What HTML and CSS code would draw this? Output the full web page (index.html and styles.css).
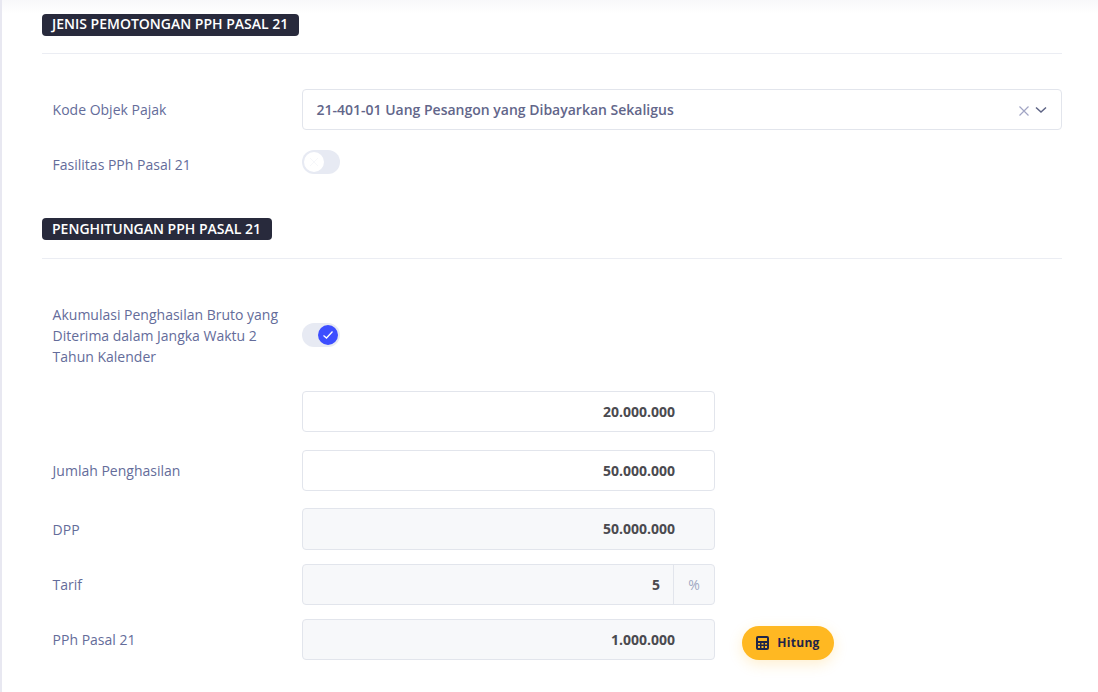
FILE: index.html
```html
<!DOCTYPE html>
<html lang="id">
<head>
<meta charset="utf-8">
<title>PPh Pasal 21</title>
<link rel="stylesheet" href="styles.css">
</head>
<body>
<main class="page">
  <section class="section first">
    <div class="head"><span class="badge">JENIS PEMOTONGAN PPH PASAL 21</span></div>
    <div class="row r-kode">
      <label class="label">Kode Objek Pajak</label>
      <div class="select">
        <span class="select-text">21-401-01 Uang Pesangon yang Dibayarkan Sekaligus</span>
        <svg class="x" width="10" height="10" viewBox="0 0 10 10"><path d="M.5.5l9 9M9.5.5l-9 9" stroke="#a1a5c4" stroke-width="1.2" fill="none"/></svg>
        <svg class="chev" width="12" height="8" viewBox="0 0 12 8"><path d="M1 1.500l5 4.500 5-4.500" stroke="#5e6485" stroke-width="1.500" fill="none"/></svg>
      </div>
    </div>
    <div class="row r-fas">
      <label class="label">Fasilitas PPh Pasal 21</label>
      <div class="toggle">
        <span class="knob off"><svg width="10" height="10" viewBox="0 0 10 10"><path d="M1 1l8 8M9 1l-8 8" stroke="#f6f7fa" stroke-width="1" fill="none"/></svg></span>
      </div>
    </div>
  </section>
  <section class="section second">
    <div class="head"><span class="badge">PENGHITUNGAN PPH PASAL 21</span></div>
    <div class="row r-aku">
      <label class="label">Akumulasi Penghasilan Bruto yang Diterima dalam Jangka Waktu 2 Tahun Kalender</label>
      <div class="toggle on">
        <span class="knob"><svg width="12" height="10" viewBox="0 0 12 10"><path d="M1.500 5.500l3 2.500 6-6.500" stroke="#fff" stroke-width="1.300" fill="none"/></svg></span>
      </div>
    </div>
    <div class="row r-20">
      <span class="label"></span>
      <div class="input">20.000.000</div>
    </div>
    <div class="row r-jml">
      <label class="label">Jumlah Penghasilan</label>
      <div class="input">50.000.000</div>
    </div>
    <div class="row r-dpp">
      <label class="label">DPP</label>
      <div class="input solid tall">50.000.000</div>
    </div>
    <div class="row r-tarif">
      <label class="label">Tarif</label>
      <div class="group">
        <div class="group-value">5</div>
        <div class="group-addon">%</div>
      </div>
    </div>
    <div class="row r-pph">
      <label class="label">PPh Pasal 21</label>
      <div class="input solid">1.000.000</div>
      <button class="btn" type="button">
        <svg width="13" height="14" viewBox="0 0 13 14"><path fill="#1f2548" fill-rule="evenodd" d="M2 0h9a2 2 0 0 1 2 2v10a2 2 0 0 1-2 2H2a2 2 0 0 1-2-2V2a2 2 0 0 1 2-2zm0 2v3h9V2zm0 5v1.500h2V7zm3.500 0v1.500h2V7zM9 7v1.500h2V7zM2 10v2h2v-2zm3.500 0v2h2v-2zM9 10v2h2v-2z"/></svg>
        <span>Hitung</span>
      </button>
    </div>
  </section>
</main>
</body>
</html>
```
FILE: styles.css
```css
* { box-sizing: border-box; }
html, body { margin: 0; padding: 0; height: 100%; overflow: hidden; background: #fff; }
body {
  font-family: "Open Sans", "Noto Sans", sans-serif;
  font-size: 14px;
  color: #4a4a4f;
}
.page {
  height: 692px;
  padding: 14px 36px 0 40px;
  border-left: 2px solid #e8e8f1;
  background: linear-gradient(#f8f8fa 0, #fff 14px) no-repeat;
}
.head {
  height: 40px;
  border-bottom: 1px solid #ebedf3;
}
.second .head { height: 41px; }
.badge {
  display: inline-block;
  height: 22px;
  padding: 0 10.500px 0 10px;
  background: #282a3c;
  border-radius: 4px;
  color: #fff;
  font-size: 14px;
  font-weight: 600;
  line-height: 20px;
  white-space: nowrap;
}
.second .badge { line-height: 21px; }
.section.second { margin-top: 44px; }
.row { display: flex; align-items: center; }
.label {
  flex: 0 0 260px;
  padding-left: 10.600px;
  padding-right: 10px;
  color: #646c9a;
  font-size: 14px;
  line-height: 21px;
}
.r-kode { margin-top: 35px; height: 41px; }
.r-fas { margin-top: 20px; height: 24px; }
.r-fas .label { padding-top: 4px; }
.select {
  flex: 1;
  height: 41px;
  display: flex;
  align-items: center;
  padding: 0 14px 0 13.500px;
  border: 1px solid #e2e5ec;
  border-radius: 4px;
  color: #62668a;
  font-weight: 600;
}
.select-text { flex: 1; }
.x { margin: 3px 6px 0 0; }
.chev { margin-top: 1px; }
.toggle {
  width: 38px;
  height: 24px;
  border-radius: 12px;
  background: #e7eaf3;
  padding: 2px;
  display: flex;
}
.toggle.on { justify-content: flex-end; margin-bottom: 2px; }
.knob {
  width: 20px;
  height: 20px;
  border-radius: 50%;
  background: #3d4eff;
  display: flex;
  align-items: center;
  justify-content: center;
}
.knob.off { background: #fff; }
.r-aku { margin-top: 45px; height: 63px; }
.r-20 { margin-top: 24px; }
.r-jml { margin-top: 18px; }
.r-dpp { margin-top: 17px; }
.r-tarif { margin-top: 14px; }
.r-pph { margin-top: 14px; }
.input {
  flex: 0 0 413px;
  height: 41px;
  padding: 0 39px 0 14px;
  border: 1px solid #e2e5ec;
  border-radius: 4px;
  text-align: right;
  font-weight: 700;
  line-height: 39px;
}
.input.tall { height: 42px; line-height: 40px; }
.solid { background: #f7f8fa; }
.group {
  flex: 0 0 413px;
  height: 41px;
  display: flex;
  border: 1px solid #e2e5ec;
  border-radius: 4px;
  background: #f7f8fa;
}
.group-value {
  flex: 1;
  padding-right: 13px;
  text-align: right;
  font-weight: 700;
  line-height: 39px;
}
.group-addon {
  flex: 0 0 41px;
  border-left: 1px solid #e2e5ec;
  text-align: center;
  color: #a1a8c3;
  line-height: 39px;
  font-size: 14px;
}
.btn {
  margin-left: 27px;
  margin-top: 6px;
  width: 92px;
  height: 34px;
  display: flex;
  align-items: center;
  justify-content: center;
  gap: 8px;
  padding: 0;
  border: 0;
  border-radius: 17px;
  background: #ffb822;
  box-shadow: 0 4px 14px rgba(255, 184, 34, .22);
  color: #1f2548;
  font-family: inherit;
  font-size: 12px;
  font-weight: 700;
  letter-spacing: .3px;
}
```
